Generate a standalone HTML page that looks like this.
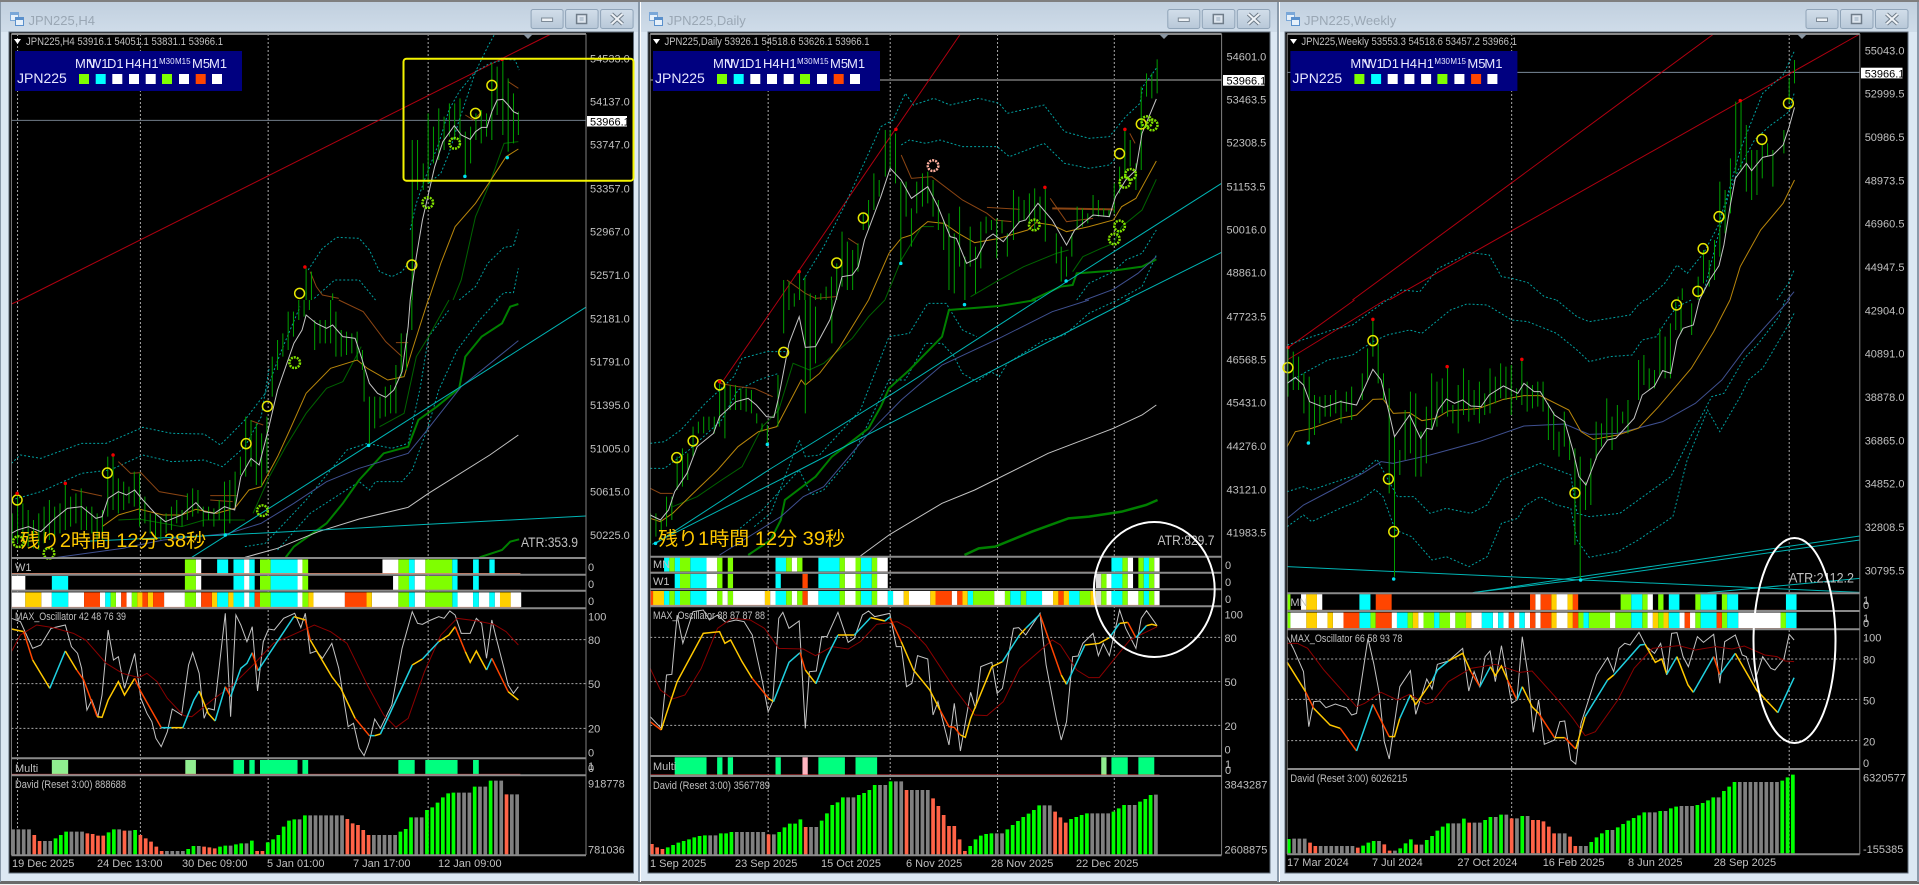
<!DOCTYPE html>
<html lang="ja"><head><meta charset="utf-8"><title>JPN225</title>
<style>
html,body{margin:0;padding:0;background:#dce8f3;overflow:hidden}
svg{display:block}
svg path,svg ellipse,svg line,svg polyline{vector-effect:non-scaling-stroke;fill:none}
text{font-family:"Liberation Sans","Noto Sans CJK JP",sans-serif;font-size:11px;fill:#c0c0c0}
.t{font-size:13px;fill:#9aa7b4}
.q{font-size:19px;fill:#ffc800}
.A{font-size:14px}
.pn{font-size:13px;fill:#e8e8ff}
.sm{font-size:8px;fill:#e8e8ff}
.v{stroke:#00a000;stroke-width:1}
.gr{stroke:#a8a8a8;stroke-width:1;stroke-dasharray:2 2}
.r{stroke:#b00010;stroke-width:1}
.c{stroke:#00b4b4;stroke-width:1}
.d{stroke:#00a0a0;stroke-width:1;stroke-dasharray:2 2}
.w{stroke:#c4c4c4;stroke-width:1}
.y{stroke:#b8860b;stroke-width:1}
.n{stroke:#006400;stroke-width:1}
.g{stroke:#008000;stroke-width:2}
.b{stroke:#3f5090;stroke-width:1}
.br{stroke:#8b4513;stroke-width:1}
.dr{stroke:#8b0000;stroke-width:1}
.o{stroke:#ff4500;stroke-width:1.5}
.a{stroke:#ffc800;stroke-width:1.5}
.k{stroke:#20d0e0;stroke-width:1.5}
.yc{stroke:#e8e800;stroke-width:1.5}
.ge{stroke:#80e000;stroke-width:2.5;stroke-dasharray:2 1}
.pg{stroke:#ffb0a0;stroke-width:2.5;stroke-dasharray:2 1}
.rd{stroke:#f00000;stroke-width:3.5;stroke-linecap:round}
.cd{stroke:#00e0f0;stroke-width:3.5;stroke-linecap:round}
.sL{stroke:#7fff00}.sC{stroke:#00ffff}.sW{stroke:#fff}.sO{stroke:#ff4500}.sG{stroke:#ffd000}.sE{stroke:#dcdcdc}
.sP{stroke:#00ff7f}.sH{stroke:#90ee90}.sK{stroke:#ffb6c1}
.bg{stroke:#808080;stroke-width:3.7}.bl{stroke:#00ff00;stroke-width:3.7}.bt{stroke:#ff6347;stroke-width:3.7}
.sep{stroke:#8a8a8a;stroke-width:2}
.sa{stroke:#f09070;stroke-width:1}
.re{stroke:#e04040;stroke-width:1}
.pl{stroke:#707c88;stroke-width:1}
</style></head><body>
<svg xmlns="http://www.w3.org/2000/svg" width="1919" height="885" viewBox="0 0 1919 885">
<defs>
<linearGradient id="tb" x1="0" y1="0" x2="0" y2="1"><stop offset="0" stop-color="#c0cfde"/><stop offset="1" stop-color="#cfdce9"/></linearGradient>
<linearGradient id="bt" x1="0" y1="0" x2="0" y2="1"><stop offset="0" stop-color="#d2deea"/><stop offset="1" stop-color="#b8c8d8"/></linearGradient>
<g id="btns">
<rect x=".5" y=".5" width="32" height="19" rx="2" fill="url(#bt)" stroke="#90a4b8"/>
<rect x="35" y=".5" width="32.5" height="19" rx="2" fill="url(#bt)" stroke="#90a4b8"/>
<rect x="70" y=".5" width="32.5" height="19" rx="2" fill="url(#bt)" stroke="#90a4b8"/>
<rect x="11" y="9" width="11" height="3.5" fill="#eef2f6" stroke="#7d8a97"/>
<rect x="46" y="5.5" width="10" height="9" fill="#dde5ee" stroke="#6f7c89" stroke-width="1.5"/>
<rect x="49" y="8" width="4" height="4" fill="#b8c6d4"/>
<path d="M81 5L92 15M92 5L81 15" style="stroke:#6f7c89;stroke-width:4;fill:none"/>
<path d="M81 5L92 15M92 5L81 15" style="stroke:#eef2f6;stroke-width:2;fill:none"/>
</g>
<g id="ico">
<rect x="0" y="0" width="9" height="9" fill="#7aa7d8"/><rect x="1" y="3" width="7" height="5" fill="#e6f0fa"/>
<rect x="5" y="5" width="9" height="9" fill="#5a90cc"/><rect x="6" y="8" width="7" height="5" fill="#e6f0fa"/>
</g>
<g id="panel">
<rect x="0" y="0" width="227" height="40" fill="#000080"/>
<text class="pn" x="60" y="17">MN</text><text class="pn" x="74" y="17">W1</text><text class="pn" x="92" y="17">D1</text><text class="pn" x="110" y="17">H4</text><text class="pn" x="127" y="17">H1</text>
<text class="sm" x="144" y="13">M30</text><text class="sm" x="160" y="13">M15</text>
<text class="pn" x="177" y="17">M5</text><text class="pn" x="194" y="17">M1</text>
<text class="pn" x="2" y="32" style="font-size:14px">JPN225</text>
<rect x="64" y="23" width="10" height="10" fill="#7fff00"/><rect x="80.7" y="23" width="10" height="10" fill="#0ff"/><rect x="97.3" y="23" width="10" height="10" fill="#fff"/><rect x="114" y="23" width="10" height="10" fill="#fff"/><rect x="130.7" y="23" width="10" height="10" fill="#fff"/><rect x="147" y="23" width="10" height="10" fill="#7fff00"/><rect x="164" y="23" width="10" height="10" fill="#fff"/><rect x="180.7" y="23" width="10" height="10" fill="#ff4500"/><rect x="197" y="23" width="10" height="10" fill="#fff"/>
</g>
</defs>

<!-- frame -->
<rect width="1919" height="885" fill="#dce8f3"/>
<rect width="1919" height="32" fill="url(#tb)"/>
<rect width="1919" height="2" fill="#7f7f7f"/>
<rect y="881" width="1919" height="3" fill="#6a6a6a"/>
<rect y="884" width="1919" height="1" fill="#f4f4f4"/>
<rect x="0" y="2" width="1" height="880" fill="#8a9aaa"/>
<rect x="638" y="2" width="2" height="880" fill="#8a9aaa"/><rect x="640" y="2" width="1" height="880" fill="#fff"/>
<rect x="1277" y="2" width="2" height="880" fill="#8a9aaa"/><rect x="1279" y="2" width="1" height="880" fill="#fff"/>
<rect x="1917" y="2" width="2" height="880" fill="#8a9aaa"/>

<use href="#ico" x="10" y="12"/><use href="#ico" x="649" y="12"/><use href="#ico" x="1286" y="12"/>
<text class="t" x="28.5" y="25">JPN225,H4</text>
<text class="t" x="667" y="25">JPN225,Daily</text>
<text class="t" x="1304" y="25">JPN225,Weekly</text>
<use href="#btns" x="530.6" y="9"/><use href="#btns" x="1167.3" y="9"/><use href="#btns" x="1805.5" y="9"/>

<rect x="9" y="32" width="624.5" height="841" fill="#000" stroke="#5f6b78"/>
<rect x="648" y="32" width="622" height="841" fill="#000" stroke="#5f6b78"/>
<rect x="1285" y="32" width="623" height="841" fill="#000" stroke="#5f6b78"/>

<!-- ===================== WINDOW 1 ===================== -->
<g transform="scale(.40816,.33333)">
<path class="gr" d="M43 102V2560M344 102V2560M657 102V2560M1049 102V2560"/>
<path class="pl" d="M28 361H1435"/>
<polyline class="r" points="50,900 1350,102"/>
<polyline class="d" points="1005,690 1020,610 1040,540 1075,430 1100,330 1125,275 1165,215 1195,140 1212,102"/>
<polyline class="d" points="1050,550 1080,520 1100,460 1125,360 1150,270 1165,215 1200,190 1240,178 1262,180 1272,210"/>
<polyline class="d" points="755,810 790,745 825,712 880,715 905,750 930,815 960,830 985,815 1000,790"/>
<polyline class="d" points="770,895 820,840 880,840 920,900"/>
<polyline class="d" points="1125,900 1165,860 1195,790 1235,742 1258,738 1270,688"/>
<polyline class="d" points="1215,900 1235,878 1258,878 1270,805"/>
<polyline class="br" points="760,815 775,860 790,885 830,895"/>
<polyline class="br" points="1140,345 1160,360 1180,335"/>
<polyline class="br" points="1245,245 1270,265"/>
<polyline class="n" points="1110,900 1130,840 1165,650 1200,550 1235,430 1270,425"/>
<polyline class="y" points="1050,900 1080,790 1115,680 1165,610 1200,545 1240,470 1270,447"/>
<path class="v" d="M750 805V900M763 815V900M815 880V900M1010 420V900M1023 420V570M1037 490V570M1049 340V550M1062 380V490M1075 325V480M1088 350V450M1101 310V410M1114 310V420M1127 295V440M1140 395V530M1153 380V490M1166 340V420M1179 330V430M1192 340V410M1205 190V420M1218 200V345M1232 180V405M1245 235V455M1258 280V430M1270 335V405"/>
<polyline class="w" points="1005,900 1012,840 1020,770 1035,660 1050,580 1065,500 1085,425 1113,377 1130,405 1152,418 1165,395 1180,382 1193,382 1205,335 1218,300 1232,298 1245,315 1258,335 1270,342"/>
<ellipse class="yc" cx="734" cy="880" rx="12" ry="15"/><ellipse class="yc" cx="1009" cy="795" rx="12" ry="15"/><ellipse class="yc" cx="1205" cy="256" rx="12" ry="15"/><ellipse class="yc" cx="1165" cy="340" rx="12" ry="15"/>
<ellipse class="ge" cx="1114" cy="430" rx="13" ry="16"/><ellipse class="ge" cx="1048" cy="608" rx="13" ry="16"/>
<path class="rd" d="M1230 178h.01M747 801h.01"/><path class="cd" d="M1139 529h.01M1243 473h.01"/>
</g>
<g transform="translate(0,300) scale(.40816,.33333)">
<polyline class="r" points="28,12 50,0"/>
<polyline class="d" points="28,490 50,465 100,475 200,430 260,430 350,382 420,400 500,402 540,435 600,360 650,280 690,150 735,20"/>
<polyline class="d" points="28,600 100,575 200,520 270,510 350,465 420,485 500,480 545,500 600,440 640,350 660,200"/>
<polyline class="d" points="680,750 760,640 880,545 905,570 920,545 985,545 1010,510 1049,380 1075,270 1120,150 1175,60 1220,0"/>
<polyline class="d" points="600,740 650,730 750,600 850,450 900,430 960,445 1000,430 1030,260 1050,110 1100,30"/>
<polyline class="br" points="290,485 320,520 345,518 390,575 460,590"/>
<path class="br" d="M175 568L250 588M515 587H580M515 600L570 605M615 362L645 375M970 128H1000"/>
<polyline class="br" points="830,0 890,35 945,125 985,170"/>
<polyline class="n" points="290,660 340,657 445,680 500,660 600,660"/>
<polyline class="n" points="620,640 660,530 700,440 750,340 800,265 840,245 885,140"/>
<polyline class="n" points="930,380 990,340 1020,170 1050,110 1100,0"/>
<polyline class="g" points="700,772 720,740 800,670 840,610 880,540 940,460 1000,440 1025,360 1070,320 1125,265 1140,170 1180,110 1230,70 1250,20 1270,12"/>
<polyline class="g" points="1175,772 1230,750 1250,725 1272,718"/>
<polyline class="b" points="140,772 300,745 400,720 560,700 640,670 720,610 800,545 880,505 1000,460 1040,400 1130,260 1270,122"/>
<polyline class="w" points="600,772 680,745 780,695 880,657 1000,622 1050,580 1200,465 1270,405"/>
<polyline class="c" points="470,772 1435,22"/>
<polyline class="c" points="190,725 550,705 1435,648"/>
<polyline class="y" points="250,680 290,645 340,627 400,645 445,645 480,628 530,640 575,625 610,570 640,560 680,470 710,390 750,280 810,205 875,180 900,205 950,240 990,230 1010,150 1049,0"/>
<path class="v" d="M30 640V730M43 580V730M56 610V720M69 630V740M82 660V745M95 640V750M108 620V730M121 600V720M134 620V710M147 610V700M160 555V690M173 590V680M186 580V670M199 565V690M212 620V690M225 620V700M238 640V720M251 630V720M264 470V650M277 465V630M290 535V640M303 545V630M316 560V610M329 515V620M342 520V680M355 590V670M368 640V700M381 640V720M394 650V720M407 640V700M420 620V690M433 600V670M446 630V680M459 580V660M472 565V650M485 570V640M498 620V680M511 620V660M524 625V680M537 600V660M550 545V705M563 540V670M576 515V620M589 470V525M602 350V530M615 360V500M628 370V555M641 400V560M654 350V520M667 170V290M680 120V210M693 100V170M706 35V150M719 35V110M732 0V60M745 0V50M758 0V30M771 60V150M784 60V130M797 60V130M810 0V130M823 35V170M836 90V170M849 95V165M862 100V160M875 95V180M888 150V210M892 210V305M905 290V435M918 290V385M931 290V355M944 260V350M957 255V340M970 195V340M983 100V230M996 100V210M1009 0V90"/>
<polyline class="w" points="28,700 43,690 70,680 100,695 130,660 165,625 200,620 235,655 250,650 265,595 290,575 310,585 330,570 350,600 380,640 405,665 445,645 480,608 500,635 525,640 550,620 575,630 590,530 615,475 635,495 655,400 680,270 720,130 740,90 750,45 775,70 800,85 815,75 840,110 870,115 885,170 905,250 925,280 945,292 965,270 985,215 1000,80 1005,0"/>
<ellipse class="yc" cx="42" cy="600" rx="12" ry="15"/><ellipse class="yc" cx="263" cy="519" rx="12" ry="15"/><ellipse class="yc" cx="603" cy="431" rx="12" ry="15"/><ellipse class="yc" cx="655" cy="319" rx="12" ry="15"/>
<ellipse class="ge" cx="722" cy="188" rx="13" ry="16"/><ellipse class="ge" cx="643" cy="632" rx="13" ry="16"/><ellipse class="ge" cx="120" cy="760" rx="13" ry="16"/><ellipse class="ge" cx="45" cy="725" rx="13" ry="16"/>
<path class="rd" d="M42 580h.01M160 550h.01M277 465h.01"/><path class="cd" d="M903 436h.01M552 705h.01"/>
<g stroke-width="14" style="stroke-width:14px">
<path class="sL" style="stroke-width:14px" d="M453 799H480M637 799H663M741 799H755M976 799H1002M1042 799H1108"/>
<path class="sC" style="stroke-width:14px" d="M532 799H559M572 799H598M611 799H624M663 799H729M1002 799H1016M1108 799H1121M1159 799H1173M1199 799H1212"/>
<path class="sW" style="stroke-width:14px" d="M480 799H493M598 799H611M729 799H741M937 799H976M1016 799H1042"/>
<path class="sL" style="stroke-width:14px" d="M453 849H480M637 849H663M741 849H755M976 849H1002M1042 849H1108"/>
<path class="sC" style="stroke-width:14px" d="M127 849H167M572 849H598M611 849H624M663 849H729M1002 849H1016M1108 849H1121M1159 849H1173"/>
<path class="sW" style="stroke-width:14px" d="M28 849H62M480 849H493M598 849H611M729 849H741M963 849H976M1016 849H1042"/>
</g>
<path class="sa" d="M28 821H1275M28 871H1275"/>
</g>
<g transform="translate(0,585) scale(.40816,.33333)">
<path class="sW" style="stroke-width:14.7px" d="M28 44H62M101 44H127M167 44H206M245 44H258M284 44H297M310 44H323M402 44H453M480 44H493M598 44H611M729 44H741M768 44H845M911 44H976M1016 44H1042M1121 44H1159M1173 44H1199M1212 44H1225M1251 44H1277"/>
<path class="sG" style="stroke-width:14.7px" d="M62 44H101M336 44H349M362 44H375M519 44H532M559 44H572M755 44H768M898 44H911M1225 44H1251"/>
<path class="sC" style="stroke-width:14.7px" d="M127 44H167M258 44H271M532 44H559M572 44H598M611 44H624M663 44H729M1002 44H1016M1108 44H1121M1159 44H1173M1199 44H1212"/>
<path class="sO" style="stroke-width:14.7px" d="M206 44H245M297 44H310M349 44H362M375 44H402M493 44H519M624 44H637M845 44H898"/>
<path class="sL" style="stroke-width:14.7px" d="M271 44H284M323 44H336M453 44H480M637 44H663M741 44H755M976 44H1002M1042 44H1108"/>
<path class="sa" d="M28 67H1275"/>
<path class="gr" d="M28 164H1435M28 296H1435M28 430H1435"/>
<polyline class="w" points="28,100 50,110 80,190 100,180 125,130 160,120 175,185 190,205 200,250 213,375 225,345 240,395 250,330 265,135 278,225 290,215 305,310 330,205 345,340 360,385 372,410 382,460 395,485 410,440 422,372 445,390 462,240 472,203 488,265 500,400 510,370 525,375 552,85 565,395 578,90 590,120 605,170 618,125 631,318 645,170 658,132 672,135 695,100 722,85 737,128 748,85 760,205 775,198 790,220 813,175 830,250 853,425 866,415 880,490 892,512 905,470 918,402 932,430 960,360 985,190 1010,80 1023,115 1035,118 1050,108 1075,95 1088,100 1102,78 1115,90 1130,145 1152,145 1167,100 1180,115 1192,220 1205,105 1218,170 1235,250 1245,300 1258,325 1270,305"/>
<polyline class="dr" points="28,200 50,150 90,120 130,128 180,145 210,165 260,235 300,265 340,278 360,265 385,290 410,340 450,392 470,395 520,345 570,300 620,240 670,175 720,148 770,120 810,140 850,175 900,300 940,390 970,427 1000,400 1040,260 1080,150 1120,100 1170,108 1210,118 1240,140 1270,180"/>
<polyline class="a" points="28,132 58,140"/><polyline class="o" points="58,140 80,225"/><polyline class="a" points="80,225 122,310"/><polyline class="k" points="122,310 160,198"/><polyline class="a" points="160,198 188,255"/><polyline class="o" points="188,255 205,285 238,395"/><polyline class="a" points="238,395 250,397 265,345 290,290 305,330 330,280"/><polyline class="o" points="330,280 345,320 395,428"/><polyline class="k" points="395,428 420,428"/><polyline class="a" points="420,428 448,428"/><polyline class="k" points="448,428 475,345 488,318"/><polyline class="a" points="488,318 510,385 527,408"/><polyline class="k" points="527,408 552,305"/><polyline class="o" points="552,305 565,335"/><polyline class="k" points="565,335 590,250 605,235 618,203"/><polyline class="o" points="618,203 632,257"/><polyline class="k" points="632,257 720,95"/><polyline class="a" points="720,95 748,105"/><polyline class="o" points="748,105 760,165"/><polyline class="a" points="760,165 813,275 835,310 870,400"/><polyline class="o" points="870,400 905,452"/><polyline class="k" points="905,452 918,452"/><polyline class="a" points="918,452 932,447"/><polyline class="k" points="932,447 1010,240"/><polyline class="a" points="1010,240 1035,222"/><polyline class="k" points="1035,222 1075,170"/><polyline class="a" points="1075,170 1100,150 1115,125"/><polyline class="o" points="1115,125 1140,200"/><polyline class="a" points="1140,200 1152,232 1167,198 1192,255"/><polyline class="k" points="1192,255 1205,220"/><polyline class="o" points="1205,220 1245,320"/><polyline class="a" points="1245,320 1270,345"/>
<path class="sH" style="stroke-width:14px" d="M127 546H167M454 546H480"/>
<path class="sP" style="stroke-width:14px" d="M572 546H598M611 546H624M637 546H729M741 546H755M976 546H1016M1042 546H1121M1159 546H1173"/>
<path class="re" d="M28 568H1275"/>
<path class="bg" d="M32 810V733M45 810V733M58 810V733M71 810V733M110 810V768M123 810V768M175 810V740M188 810V740M201 810V740M292 810V733M318 810V737M409 810V798M422 810V798M435 810V798M448 810V798M487 810V783M565 810V782M604 810V775M734 810V703M760 810V691M773 810V691M786 810V691M799 810V691M812 810V691M825 810V691M838 810V691M916 810V750M929 810V750M942 810V750M955 810V750M968 810V750M1020 810V697M1033 810V697M1124 810V623M1137 810V623M1150 810V623M1176 810V605M1189 810V605M1215 810V587M1228 810V587M1254 810V628M1267 810V628"/>
<path class="bl" d="M136 810V760M149 810V750M162 810V740M266 810V742M279 810V733M331 810V735M461 810V792M474 810V783M539 810V785M552 810V782M578 810V778M591 810V775M617 810V767M656 810V772M669 810V763M682 810V750M695 810V725M708 810V707M721 810V703M747 810V691M981 810V740M994 810V732M1007 810V697M1046 810V675M1059 810V667M1072 810V653M1085 810V637M1098 810V625M1111 810V623M1163 810V605M1202 810V587"/>
<path class="bt" d="M84 810V750M97 810V768M214 810V745M227 810V747M240 810V752M253 810V752M305 810V737M344 810V750M357 810V760M370 810V770M383 810V785M396 810V798M500 810V785M513 810V787M526 810V790M630 810V798M643 810V798M851 810V702M864 810V715M877 810V720M890 810V735M903 810V750M1241 810V628"/>
</g>
<path class="sep" style="fill:none" d="M11.4 34H586M11.4 558H586M11.4 574.7H586M11.4 590.7H586M11.4 608.3H586M11.4 758.3H586M11.4 775.3H586M11.4 855.3H586"/>
<path style="stroke:#808080;fill:none" d="M586 34V855M11.4 34V855"/>
<polygon points="523,34 533,34 528,39" fill="#8a96a2"/>
<polygon points="14,39 21,39 17.5,44" fill="#fff"/>
<text x="26" y="45" textLength="197" lengthAdjust="spacingAndGlyphs">JPN225,H4  53916.1 54051.1 53831.1 53966.1</text>
<use href="#panel" x="15" y="51"/>
<text x="590" y="62.7">54533.0</text><text x="590" y="105.7">54137.0</text><text x="590" y="148.7">53747.0</text><text x="590" y="192.3">53357.0</text><text x="590" y="235.7">52967.0</text><text x="590" y="279">52571.0</text><text x="590" y="322.3">52181.0</text><text x="590" y="365.7">51791.0</text><text x="590" y="409">51395.0</text><text x="590" y="452.3">51005.0</text><text x="590" y="495.7">50615.0</text><text x="590" y="539">50225.0</text>
<rect x="587" y="116" width="40" height="10.5" fill="#fff"/><text x="590" y="125.5" style="fill:#000">53966.1</text>
<text class="q" x="20" y="547" textLength="186" lengthAdjust="spacingAndGlyphs">残り2時間 12分 38秒</text>
<text class="A" x="521" y="547" textLength="57" lengthAdjust="spacingAndGlyphs">ATR:353.9</text>
<text x="15" y="571">W1</text>
<text x="588" y="571">0</text><text x="588" y="588">0</text><text x="588" y="605">0</text><text x="588" y="772">0</text><text x="588" y="770">1</text>
<text x="15" y="620" textLength="111" lengthAdjust="spacingAndGlyphs">MAX_Oscillator 42 48 76 39</text>
<text x="588" y="620.3">100</text><text x="588" y="644">80</text><text x="588" y="688">50</text><text x="588" y="732.7">20</text><text x="588" y="756.3">0</text>
<text x="15" y="772">Multi</text>
<text x="15" y="788" textLength="111" lengthAdjust="spacingAndGlyphs">David (Reset 3:00) 888688</text>
<text x="588" y="787.7">918778</text><text x="588" y="853.7">781036</text>
<text x="12" y="867">19 Dec 2025</text><text x="97" y="867">24 Dec 13:00</text><text x="182" y="867">30 Dec 09:00</text><text x="267" y="867">5 Jan 01:00</text><text x="353" y="867">7 Jan 17:00</text><text x="438" y="867">12 Jan 09:00</text>
<rect x="403.5" y="58.7" width="230" height="122" rx="3" fill="none" stroke="#f4f400" stroke-width="2"/>

<!-- ===================== WINDOW 2 ===================== -->
<g transform="translate(640,0) scale(.40816,.33333)">
<path class="gr" d="M314 102V2560M613 102V2560M876 102V2560M1162 102V2560"/>
<path style="stroke:#585858;stroke-width:2px" d="M25 240H1425"/>
<polyline class="r" points="340,900 785,102"/>
<polyline class="d" points="400,840 450,740 500,620 560,460 590,380 620,360 650,280 670,315 720,295 760,315 830,295 880,310 900,340 990,315 1040,395 1100,415 1150,410 1190,350 1225,310 1232,260 1265,205"/>
<polyline class="d" points="640,435 660,420 700,430 735,420 790,440 875,440 905,470 990,430 1040,490 1100,505 1150,495 1170,470"/>
<polyline class="d" points="1070,900 1100,850 1160,815 1190,780 1230,760 1265,690"/>
<polyline class="d" points="1170,900 1230,860 1265,765"/>
<polyline class="br" points="640,465 665,535 715,530 790,600 850,640 870,660 910,665"/>
<path class="br" d="M850 622L930 628M1200 400L1213 430M510 715L535 735"/>
<polyline class="br" points="1005,595 1045,665 1110,655"/>
<path class="br" style="stroke-width:2px" d="M1010 625L1160 628"/>
<polyline class="br" points="360,840 405,880 430,895 480,890"/>
<polyline class="n" points="600,900 640,780 690,680 720,680"/>
<polyline class="n" points="810,890 880,840 940,800 1020,760 1050,750"/>
<polyline class="n" points="1060,815 1085,770 1130,745 1160,730 1180,680 1230,630 1265,538"/>
<polyline class="g" points="960,900 1030,860 1060,855 1070,820 1160,812 1230,800 1265,778"/>
<polyline class="b" points="1090,900 1160,868 1220,820 1265,770"/>
<polyline class="c" points="975,900 1425,550"/><polyline class="c" points="1190,900 1425,757"/>
<polyline class="y" points="560,900 610,760 640,715 665,705 705,665 745,670 780,700 820,728 880,715 950,690 970,668 1010,675 1045,695 1100,680 1160,660 1180,620 1215,595 1265,483"/>
<path class="v" d="M352 840V900M365 845V900M378 880V900M391 815V900M404 830V900M417 880V900M430 885V900M443 880V900M456 860V900M469 830V900M482 790V900M495 695V860M508 725V870M521 750V870M534 730V815M547 640V690M560 600V690M573 520V630M586 540V590M601 390V530M613 390V505M626 400V550M639 545V790M652 545V650M665 625V740M678 545V640M692 520V620M705 515V610M718 540V650M731 600V690M744 660V750M757 640V870M770 700V880M783 620V800M796 770V900M809 680V800M822 740V880M835 665V805M848 650V700M861 660V690M874 655V775M887 660V700M900 700V770M915 570V720M928 590V670M941 600V660M954 580V665M967 565V690M980 590V660M993 560V725M1020 700V790M1032 740V845M1045 770V830M1058 700V770M1071 620V690M1084 625V680M1097 640V670M1110 585V650M1123 600V650M1136 625V650M1149 630V650M1162 550V640M1175 500V580M1188 390V530M1201 420V500M1215 490V570M1228 260V510M1241 220V290M1254 220V295M1267 178V280"/>
<polyline class="w" points="480,900 495,830 520,825 535,800 550,720 590,590 613,505 640,540 665,595 705,560 730,620 760,710 775,715 800,790 825,775 850,715 865,702 890,725 930,665 945,660 975,610 1010,660 1045,735 1065,690 1110,645 1150,650 1165,590 1190,540 1215,510 1230,400 1265,297"/>
<ellipse class="yc" cx="482" cy="789" rx="12" ry="15"/><ellipse class="yc" cx="547" cy="654" rx="12" ry="15"/><ellipse class="yc" cx="1175" cy="461" rx="12" ry="15"/><ellipse class="yc" cx="1228" cy="372" rx="12" ry="15"/>
<ellipse class="pg" cx="718" cy="497" rx="13" ry="16"/>
<ellipse class="ge" cx="966" cy="675" rx="13" ry="16"/><ellipse class="ge" cx="1175" cy="678" rx="13" ry="16"/><ellipse class="ge" cx="1162" cy="717" rx="13" ry="16"/><ellipse class="ge" cx="1188" cy="547" rx="13" ry="16"/><ellipse class="ge" cx="1202" cy="523" rx="13" ry="16"/><ellipse class="ge" cx="1242" cy="365" rx="13" ry="16"/><ellipse class="ge" cx="1255" cy="375" rx="13" ry="16"/>
<path class="rd" d="M390 815h.01M627 388h.01M992 562h.01M1188 388h.01"/><path class="cd" d="M639 790h.01M1044 843h.01"/>
</g>
<g transform="translate(640,300) scale(.40816,.33333)">
<polyline class="r" points="205,240 340,0"/>
<polyline class="d" points="25,430 60,425 100,390 160,310 230,230 250,175 310,155 365,155"/>
<polyline class="d" points="25,505 60,505 120,450 200,360 240,270 290,240 340,220"/>
<polyline class="d" points="280,680 320,640 390,420 405,470 440,465 540,330 610,110 660,100 705,10 750,10 790,90 825,110"/>
<polyline class="d" points="230,700 300,630 390,510 420,585 450,570 520,470 610,240 650,240 700,130 740,130 770,170 790,220 825,245 860,215 880,230 900,190 990,120 1040,105 1100,40 1170,0"/>
<polyline class="br" points="25,565 50,580 80,580"/>
<polyline class="br" points="195,250 240,260 280,265 325,290"/>
<polyline class="n" points="80,620 140,590 200,540 250,500 300,380 340,330 375,190 415,210 450,190 520,115 560,50 600,0"/>
<polyline class="g" points="265,765 320,720 345,660 355,600 430,530 470,470 560,385 590,320 610,265 660,210 740,110 757,30 880,18 970,0"/>
<polyline class="g" style="stroke-width:2.5px" points="795,765 830,745 870,740 960,695 1050,655 1100,650 1180,635 1240,615 1268,600"/>
<polyline class="b" points="195,765 345,650 400,590 450,560 560,400 640,300 740,195 880,115 1010,35 1100,0"/>
<polyline class="w" points="540,768 610,705 740,610 820,570 1000,460 1160,385 1230,345 1265,315"/>
<polyline class="c" points="35,733 315,510 620,280 975,0"/><polyline class="c" points="30,733 390,510 620,365 1200,0"/>
<polyline class="y" points="25,655 50,665 80,640 130,580 190,510 240,440 290,395 335,380 395,240 405,255 440,220 490,140 540,40 560,0"/>
<path class="v" d="M26 640V730M39 640V710M52 660V720M65 590V680M78 590V660M91 470V570M104 445V560M117 460V540M130 380V470M143 365V400M156 350V400M169 350V390M182 350V400M195 250V380M208 250V415M221 255V330M234 255V330M247 265V330M260 265V335M273 270V340M286 340V370M299 370V395M312 375V430M338 225V380M352 0V100M365 0V30M378 0V20M405 0V340M417 0V240M430 20V190M470 0V130"/>
<polyline class="w" points="25,645 50,660 70,630 85,575 115,520 140,440 180,400 195,350 235,305 265,295 285,315 310,350 328,352 340,290 365,130 390,50 405,142 430,140 465,60 480,0"/>
<ellipse class="yc" cx="90" cy="473" rx="12" ry="15"/><ellipse class="yc" cx="130" cy="423" rx="12" ry="15"/><ellipse class="yc" cx="195" cy="255" rx="12" ry="15"/><ellipse class="yc" cx="352" cy="157" rx="12" ry="15"/>
<path class="cd" d="M312 433h.01M795 14h.01M38 730h.01"/><path class="rd" d="M195 245h.01"/>
<path class="sC" style="stroke-width:14.3px" d="M59 793H72M85 793H98M123 793H163M332 793H358M437 793H489M541 793H568M1155 793H1182M1234 793H1247"/>
<path class="sL" style="stroke-width:14.3px" d="M72 793H85M98 793H123M189 793H202M215 793H228M358 793H372M385 793H398M489 793H502M528 793H541M568 793H581M1182 793H1195M1221 793H1234M1247 793H1260"/>
<path class="sW" style="stroke-width:14.3px" d="M163 793H189M372 793H385M502 793H528M581 793H607M1195 793H1208M1260 793H1273"/>
<path class="sC" style="stroke-width:14.3px" d="M85 843H98M123 843H163M332 843H345M437 843H489M541 843H568M1155 843H1182M1234 843H1247"/>
<path class="sL" style="stroke-width:14.3px" d="M98 843H123M189 843H202M215 843H228M489 843H502M528 843H541M568 843H581M1130 843H1143M1182 843H1195M1221 843H1234M1247 843H1260"/>
<path class="sW" style="stroke-width:14.3px" d="M163 843H189M502 843H528M581 843H607M1143 843H1155M1195 843H1208M1260 843H1273"/>
<path class="sO" style="stroke-width:14.3px" d="M398 843H411"/><path class="sE" style="stroke-width:14.3px" d="M1117 843H1130"/>
<path class="sa" d="M25 817H1273M25 867H1273"/>
</g>
<g transform="translate(640,585) scale(.40816,.33333)">
<path class="sO" style="stroke-width:14px" d="M25 39H32M398 39H411M724 39H764M777 39H790M1025 39H1038"/>
<path class="sG" style="stroke-width:14px" d="M32 39H59M306 39H319M646 39H659M711 39H724M790 39H803M1012 39H1025M1038 39H1051M1103 39H1116"/>
<path class="sC" style="stroke-width:14px" d="M59 39H72M85 39H98M123 39H163M332 39H358M437 39H489M541 39H568M607 39H620M803 39H816M907 39H933M946 39H985M1051 39H1077M1155 39H1182M1234 39H1247"/>
<path class="sL" style="stroke-width:14px" d="M72 39H85M98 39H123M189 39H202M215 39H228M358 39H372M385 39H398M489 39H502M528 39H541M568 39H581M816 39H868M894 39H907M933 39H946M1077 39H1103M1130 39H1143M1182 39H1195M1221 39H1234M1247 39H1260"/>
<path class="sW" style="stroke-width:14px" d="M163 39H189M202 39H215M228 39H306M319 39H332M372 39H385M411 39H437M502 39H528M581 39H607M620 39H646M659 39H711M764 39H777M868 39H894M985 39H1012M1143 39H1155M1195 39H1221M1260 39H1273"/>
<path class="sE" style="stroke-width:14px" d="M1116 39H1130"/>
<path class="sa" d="M25 61H1273"/>
<path class="gr" d="M25 157H1425M25 290H1425M25 421H1425"/>
<polyline class="w" points="25,395 52,430 65,270 78,268 91,90 105,175 130,80 155,75 170,105 190,90 210,112 235,105 255,110 275,150 300,290 314,380 325,350 340,100 350,82 365,130 390,108 405,430 415,260 432,258 445,155 458,155 485,82 510,172 525,160 545,90 560,78 575,95 612,85 628,185 640,185 653,305 666,295 680,212 705,222 718,390 730,350 757,480 770,355 785,498 810,322 822,370 835,245 862,232 875,325 888,310 915,130 928,128 945,150 980,85 995,240 1020,400 1032,465 1045,410 1060,215 1073,213 1085,175 1110,145 1123,212 1135,175 1150,212 1175,75 1190,130 1215,190 1228,100 1241,77 1267,122"/>
<polyline class="dr" points="25,250 50,315 80,342 110,330 150,250 190,130 225,100 270,105 305,130 340,190 400,192 430,212 470,185 510,192 540,170 580,118 630,110 660,130 700,180 770,310 820,390 850,392 890,350 930,250 1010,165 1030,180 1070,255 1100,278 1125,278 1160,225 1200,165 1267,125"/>
<polyline class="o" points="25,410 52,435"/><polyline class="a" points="52,435 65,385 91,290 155,145 195,140 208,175 222,165 250,230 275,280"/><polyline class="o" points="275,280 315,340"/><polyline class="a" points="315,340 327,350"/><polyline class="k" points="327,350 365,232 392,203"/><polyline class="o" points="392,203 405,255"/><polyline class="a" points="405,255 431,296"/><polyline class="k" points="431,296 458,215 485,150"/><polyline class="a" points="485,150 525,150"/><polyline class="k" points="525,150 565,98"/><polyline class="a" points="565,98 600,108"/><polyline class="k" points="600,108 613,95"/><polyline class="o" points="613,100 640,170"/><polyline class="a" points="640,170 670,255 710,315 735,375"/><polyline class="o" points="735,375 757,425 770,427 785,450"/><polyline class="a" points="785,450 797,457 810,400 862,245 888,230"/><polyline class="k" points="888,230 930,150"/><polyline class="a" points="930,150 945,130"/><polyline class="k" points="945,130 980,88"/><polyline class="o" points="980,88 1032,270"/><polyline class="a" points="1032,270 1045,298"/><polyline class="k" points="1045,298 1090,180"/><polyline class="a" points="1090,180 1125,175 1150,158"/><polyline class="k" points="1150,158 1175,115"/><polyline class="a" points="1175,115 1195,112"/><polyline class="o" points="1195,112 1215,158"/><polyline class="k" points="1215,158 1241,122"/><polyline class="a" points="1241,122 1254,118 1267,122"/>
<path class="sP" style="stroke-width:17.5px" d="M85 543H163M189 543H202M215 543H228M332 543H345M437 543H502M528 543H581M1155 543H1195M1221 543H1260"/>
<path class="sK" style="stroke-width:17.5px" d="M398 543H411"/><path class="sH" style="stroke-width:17.5px" d="M1130 543H1143"/>
<path class="re" d="M25 570H1273"/>
<path class="bg" d="M172 810V751M185 810V751M237 810V741M250 810V741M263 810V741M276 810V741M289 810V741M302 810V741M328 810V748M419 810V726M432 810V726M510 810V637M523 810V637M588 810V600M601 810V600M627 810V589M640 810V589M666 810V615M679 810V615M692 810V615M705 810V615M874 810V745M887 810V745M991 810V661M1004 810V661M1108 810V685M1121 810V685M1134 810V685M1147 810V685M1199 810V660M1212 810V660M1264 810V629"/>
<path class="bl" d="M68 810V787M81 810V780M94 810V773M107 810V768M120 810V763M133 810V757M146 810V753M159 810V751M198 810V745M211 810V745M224 810V741M341 810V741M354 810V727M367 810V716M380 810V716M393 810V703M445 810V707M458 810V685M471 810V660M484 810V652M497 810V637M536 810V630M549 810V624M562 810V615M575 810V600M614 810V589M809 810V783M822 810V763M835 810V752M848 810V747M861 810V745M900 810V733M913 810V720M926 810V708M939 810V696M952 810V686M965 810V675M978 810V661M1056 810V702M1069 810V696M1082 810V690M1095 810V685M1160 810V680M1173 810V670M1186 810V660M1225 810V650M1238 810V642M1251 810V630"/>
<path class="bt" d="M29 810V777M42 810V787M55 810V792M315 810V748M406 810V726M653 810V615M718 810V640M731 810V663M744 810V690M757 810V723M770 810V723M783 810V763M796 810V798M1017 810V680M1030 810V697M1043 810V713"/>
</g>
<path class="sep" style="fill:none" d="M650.2 34H1221.6M650.2 556.7H1221.6M650.2 572.7H1221.6M650.2 589.3H1221.6M650.2 606.3H1221.6M650.2 756H1221.6M650.2 776H1221.6M650.2 855.3H1221.6"/>
<path style="stroke:#808080;fill:none" d="M1221.6 34V855M650.2 34V855"/>
<polygon points="1159,34 1169,34 1164,39" fill="#8a96a2"/>
<polygon points="653,39 660,39 656.5,44" fill="#fff"/>
<text x="664.5" y="45" textLength="205" lengthAdjust="spacingAndGlyphs">JPN225,Daily  53926.1 54518.6 53626.1 53966.1</text>
<use href="#panel" x="653" y="51"/>
<text x="1226.5" y="60.7">54601.0</text><text x="1226.5" y="103.7">53463.5</text><text x="1226.5" y="146.7">52308.5</text><text x="1226.5" y="190.3">51153.5</text><text x="1226.5" y="233.3">50016.0</text><text x="1226.5" y="276.7">48861.0</text><text x="1226.5" y="320.3">47723.5</text><text x="1226.5" y="363.3">46568.5</text><text x="1226.5" y="406.7">45431.0</text><text x="1226.5" y="450">44276.0</text><text x="1226.5" y="493.3">43121.0</text><text x="1226.5" y="536.7">41983.5</text>
<rect x="1223" y="75" width="41.5" height="10.7" fill="#fff"/><text x="1226.5" y="84.5" style="fill:#000">53966.1</text>
<text class="q" x="658" y="545" textLength="187" lengthAdjust="spacingAndGlyphs">残り1時間 12分 39秒</text>
<text class="A" x="1157.5" y="545" textLength="57" lengthAdjust="spacingAndGlyphs">ATR:829.7</text>
<text x="653" y="568">MN</text><text x="653" y="585">W1</text>
<text x="1225" y="569">0</text><text x="1225" y="586">0</text><text x="1225" y="603">0</text><text x="1225" y="768">1</text><text x="1225" y="774">0</text>
<text x="653" y="619" textLength="112" lengthAdjust="spacingAndGlyphs">MAX_Oscillator 88 87 87 88</text>
<text x="1224.5" y="618.3">100</text><text x="1224.5" y="642">80</text><text x="1224.5" y="686">50</text><text x="1224.5" y="730">20</text><text x="1224.5" y="753.7">0</text>
<text x="653" y="770">Multi</text>
<text x="653" y="789" textLength="117" lengthAdjust="spacingAndGlyphs">David (Reset 3:00) 3567789</text>
<text x="1224.5" y="788.3">3843287</text><text x="1224.5" y="853.7">2608875</text>
<text x="650" y="867">1 Sep 2025</text><text x="735" y="867">23 Sep 2025</text><text x="821" y="867">15 Oct 2025</text><text x="906" y="867">6 Nov 2025</text><text x="991" y="867">28 Nov 2025</text><text x="1076" y="867">22 Dec 2025</text>
<ellipse cx="1154.3" cy="589.5" rx="60.4" ry="67.5" style="fill:none;stroke:#fff;stroke-width:2"/>

<!-- ===================== WINDOW 3 ===================== -->
<g transform="translate(1279,0) scale(.40816,.33333)">
<path class="gr" d="M570 102V2560M1250 102V2560"/>
<path class="pl" style="stroke:#7a8a9a" d="M20 217H1423"/>
<polyline class="r" points="180,900 1065,102"/><polyline class="r" points="270,900 1423,102"/>
<polyline class="d" points="265,900 300,870 345,875 390,805 440,775 465,757 515,765 545,830 570,835 610,848 650,890 680,900"/>
<polyline class="d" points="900,900 945,850 975,795 1000,820 1040,760 1075,680 1105,560 1130,450 1185,280 1235,225 1262,155"/>
<polyline class="d" points="1040,880 1100,590 1125,510 1165,420 1200,380 1250,335 1262,280"/>
<polyline class="d" points="1220,900 1248,850 1262,810"/>
<polyline class="b" points="1245,900 1262,875"/>
<polyline class="y" points="1105,900 1130,800 1180,690 1235,610 1263,540"/>
<path class="v" d="M978 890V900M988 865V900M1027 830V900M1040 750V850M1054 780V860M1067 720V840M1080 545V770M1093 570V700M1106 475V640M1119 305V520M1132 300V515M1145 375V575M1158 450V600M1171 450V585M1184 430V535M1197 430V470M1210 450V560M1237 390V460M1250 235V310M1263 180V250"/>
<polyline class="w" points="1030,900 1055,840 1078,797 1090,735 1105,620 1118,535 1145,490 1158,512 1185,472 1210,465 1235,435 1250,380 1263,322"/>
<ellipse class="yc" cx="1248" cy="310" rx="12" ry="15"/><ellipse class="yc" cx="1183" cy="418" rx="12" ry="15"/><ellipse class="yc" cx="1078" cy="650" rx="12" ry="15"/><ellipse class="yc" cx="1039" cy="746" rx="12" ry="15"/><ellipse class="yc" cx="1026" cy="874" rx="12" ry="15"/>
<path class="rd" d="M1130 302h.01"/>
</g>
<g transform="translate(1279,300) scale(.40816,.33333)">
<polyline class="r" points="20,145 185,0"/><polyline class="r" points="20,180 260,0"/>
<polyline class="d" points="20,250 60,220 120,180 180,165 230,125 265,105 320,90 350,100 420,30 460,12 510,15 570,60 610,65 680,100 730,150 760,185 810,170 865,165 890,120 925,110 950,60 975,20 1010,0"/>
<polyline class="d" points="20,135 130,90 180,75 230,30 265,0"/>
<polyline class="d" points="680,0 730,50 760,65 860,45 880,15 895,0"/>
<polyline class="d" points="20,680 60,645 80,665 150,625 200,600 235,568 255,590 270,640 285,690 325,710 375,780 410,770 465,800 510,770 545,670 585,655 600,620 640,590 680,615 715,625 730,720 760,772 830,755 880,720 965,650 1000,480 1050,330 1080,395 1130,290 1150,240 1185,205 1250,70 1262,40"/>
<polyline class="d" points="20,575 60,560 80,570 200,520 240,478 290,590 330,590 370,640 410,625 470,640 510,615 545,540 600,510 640,490 715,525 730,640 760,650 835,640 960,530 1000,430 1060,290 1090,280 1140,175 1175,130 1225,50 1240,0"/>
<polyline class="b" points="20,655 60,615 130,570 205,520 250,485 280,490 370,465 490,425 600,378 700,372 760,403 830,400 940,365 1020,310 1085,240 1140,150 1250,0"/>
<polyline class="y" points="20,440 40,395 80,385 150,355 190,345 230,298 255,297 280,340 320,338 350,362 385,355 415,333 490,325 550,298 600,287 640,287 710,330 740,395 770,418 830,405 880,385 930,320 1010,205 1065,95 1105,0"/>
<polyline class="c" points="20,800 560,830 1423,877"/>
<polyline class="c" points="475,878 740,830 1423,708"/><polyline class="c" points="475,878 740,838 1423,720"/><polyline class="c" points="1050,878 1423,835"/>
<path class="v" d="M22 140V290M35 155V270M48 170V270M61 220V340M74 230V425M87 285V405M100 290V370M113 285V350M126 285V350M139 270V340M152 300V370M165 275V335M178 260V360M204 220V300M217 145V240M230 60V170M243 130V250M256 220V300M270 265V580M283 410V830M296 450V525M309 330V480M322 275V460M335 280V530M348 395V530M361 320V490M374 220V390M387 245V380M400 235V340M413 200V350M426 315V370M439 255V400M452 205V345M465 240V365M478 270V345M491 245V370M504 280V345M517 205V340M530 230V310M543 190V295M556 200V300M569 195V345M582 265V300M595 180V315M608 245V335M621 255V325M634 245V320M647 245V335M660 310V420M673 335V450M686 395V470M699 335V440M712 410V480M725 445V735M738 470V835M751 545V630M764 475V615M777 365V480M790 370V440M803 295V420M816 350V450M829 315V400M842 335V370M855 300V400M881 180V300M894 165V255M907 205V270M920 210V265M933 85V230M946 110V235M959 70V235M972 5V90M985 5V100M1011 10V105"/>
<polyline class="w" points="20,250 40,232 60,255 75,305 110,322 150,305 190,315 230,208 250,240 270,340 283,410 320,345 347,415 362,385 375,388 390,330 410,297 430,310 450,300 470,318 495,320 515,285 550,258 585,280 600,250 625,275 640,275 675,345 700,365 720,450 735,530 752,555 780,465 805,420 825,415 870,355 890,285 920,258 940,212 960,220 975,120 990,85 1015,75 1030,0"/>
<ellipse class="yc" cx="230" cy="122" rx="12" ry="15"/><ellipse class="yc" cx="268" cy="537" rx="12" ry="15"/><ellipse class="yc" cx="281" cy="695" rx="12" ry="15"/><ellipse class="yc" cx="725" cy="579" rx="12" ry="15"/><ellipse class="yc" cx="22" cy="203" rx="12" ry="15"/><ellipse class="yc" cx="974" cy="15" rx="12" ry="15"/>
<path class="rd" d="M230 58h.01M412 200h.01M595 178h.01M22 142h.01"/><path class="cd" d="M72 429h.01M281 837h.01M739 840h.01"/>
</g>
<g transform="translate(1279,585) scale(.40816,.33333)">
<path class="sL" style="stroke-width:15.7px" d="M20 51H28M837 51H863M890 51H903M929 51H942M1020 51H1033M1085 51H1098"/>
<path class="sW" style="stroke-width:15.7px" d="M54 51H67M93 51H106M628 51H641M680 51H707M903 51H916"/>
<path class="sG" style="stroke-width:15.7px" d="M67 51H93M667 51H680M707 51H720"/>
<path class="sC" style="stroke-width:15.7px" d="M197 51H224M863 51H890M955 51H981M1033 51H1072M1098 51H1125M1242 51H1268"/>
<path class="sO" style="stroke-width:15.7px" d="M237 51H276M615 51H628M641 51H667M720 51H733"/>
<path class="sL" style="stroke-width:15.7px" d="M20 106H28M224 106H237M315 106H328M354 106H380M393 106H419M432 106H458M733 106H746M759 106H811M824 106H863M890 106H903M929 106H942M1020 106H1033M1085 106H1098M1229 106H1242"/>
<path class="sW" style="stroke-width:15.7px" d="M28 106H67M93 106H119M132 106H158M276 106H289M341 106H354M419 106H432M471 106H497M524 106H537M550 106H563M576 106H589M602 106H615M628 106H641M680 106H707M811 106H824M903 106H916M981 106H994M1007 106H1020M1125 106H1229"/>
<path class="sG" style="stroke-width:15.7px" d="M67 106H93M119 106H132M328 106H341M458 106H471M667 106H680M707 106H720M916 106H929M942 106H955"/>
<path class="sO" style="stroke-width:15.7px" d="M158 106H197M237 106H276M563 106H576M615 106H628M641 106H667M720 106H733M994 106H1007M1072 106H1085"/>
<path class="sC" style="stroke-width:15.7px" d="M197 106H224M289 106H315M380 106H393M497 106H524M537 106H550M589 106H602M746 106H759M863 106H890M955 106H981M1033 106H1072M1098 106H1125M1242 106H1268"/>
<path class="sa" d="M20 76H1268M20 131H1268"/>
<path class="gr" d="M20 222H1423M20 343H1423M20 467H1423"/>
<polyline class="w" points="20,155 35,190 60,260 73,425 85,350 100,348 115,368 138,357 165,368 178,390 190,385 218,160 232,235 245,320 258,470 270,522 296,305 322,257 335,388 362,282 375,312 388,238 415,228 450,190 465,318 478,260 492,305 505,215 517,198 530,290 545,182 570,355 583,345 596,155 610,270 623,442 636,345 650,478 675,465 688,410 700,408 715,525 727,537 740,415 778,270 805,218 820,260 833,190 847,175 860,180 882,142 900,185 920,205 935,175 950,270 962,145 975,143 990,215 1003,245 1025,155 1040,172 1065,148 1080,295 1092,170 1118,150 1135,210 1145,215 1165,290 1185,215 1205,250 1215,255 1237,222 1250,148 1262,165"/>
<polyline class="dr" points="20,175 45,175 70,190 110,255 190,365 210,355 250,322 290,345 320,328 360,357 375,352 415,290 470,250 530,238 590,262 620,258 680,340 720,400 750,452 775,440 830,345 870,250 915,190 980,182 1020,195 1070,185 1110,192 1140,183 1190,210 1220,215 1240,228 1262,230"/>
<polyline class="a" points="20,232 65,320"/><polyline class="o" points="65,320 85,370"/><polyline class="a" points="85,370 125,420 150,430"/><polyline class="o" points="150,430 190,498"/><polyline class="k" points="190,498 230,358"/><polyline class="o" points="230,358 270,455"/><polyline class="a" points="270,455 283,455 296,400"/><polyline class="k" points="296,400 322,330"/><polyline class="a" points="322,330 335,358 375,288"/><polyline class="k" points="375,288 388,255 415,228"/><polyline class="a" points="415,228 450,205 470,260"/><polyline class="o" points="470,260 492,305"/><polyline class="k" points="492,305 518,245"/><polyline class="a" points="518,245 530,272 545,243 560,285"/><polyline class="o" points="560,285 583,345"/><polyline class="k" points="583,345 596,305"/><polyline class="a" points="596,305 620,365 636,385"/><polyline class="o" points="636,385 675,458"/><polyline class="a" points="675,458 700,458"/><polyline class="o" points="700,458 727,492"/><polyline class="a" points="727,492 750,395"/><polyline class="k" points="750,395 805,285"/><polyline class="a" points="805,285 820,270"/><polyline class="k" points="820,270 885,180 897,178"/><polyline class="a" points="897,178 922,232 938,222 950,268"/><polyline class="k" points="950,268 975,215"/><polyline class="a" points="975,215 1002,300 1015,322"/><polyline class="k" points="1015,322 1065,215"/><polyline class="o" points="1065,215 1080,270"/><polyline class="k" points="1080,270 1118,205"/><polyline class="a" points="1118,205 1170,315 1222,383"/><polyline class="k" points="1222,383 1262,278"/>
<path class="bg" d="M37 805V761M50 805V761M63 805V761M102 805V783M115 805V783M128 805V783M141 805V783M154 805V783M167 805V783M180 805V783M245 805V768M284 805V797M349 805V779M427 805V715M440 805V715M479 805V713M492 805V713M531 805V696M557 805V689M583 805V700M609 805V693M687 805V745M700 805V745M739 805V783M752 805V783M817 805V735M908 805V682M921 805V682M947 805V678M986 805V663M999 805V663M1012 805V663M1077 805V637M1129 805V591M1142 805V591M1155 805V591M1168 805V591M1181 805V591M1194 805V591M1207 805V591M1220 805V591"/>
<path class="bl" d="M24 805V762M206 805V782M219 805V773M232 805V768M297 805V790M310 805V775M323 805V763M362 805V765M375 805V753M388 805V737M401 805V725M414 805V715M453 805V701M505 805V705M518 805V696M544 805V689M596 805V693M765 805V771M778 805V757M791 805V745M804 805V735M830 805V727M843 805V717M856 805V707M869 805V699M882 805V691M895 805V682M934 805V678M960 805V670M973 805V665M1025 805V660M1038 805V654M1051 805V646M1064 805V637M1090 805V618M1103 805V605M1116 805V591M1233 805V587M1246 805V577M1259 805V569"/>
<path class="bt" d="M76 805V773M89 805V783M193 805V788M258 805V778M271 805V797M336 805V779M466 805V713M570 805V700M622 805V705M635 805V705M648 805V709M661 805V725M674 805V745M713 805V755M726 805V783"/>
</g>
<path class="sep" style="fill:none" d="M1287.2 34H1859.8M1287.2 593.3H1859.8M1287.2 611H1859.8M1287.2 629.3H1859.8M1287.2 769H1859.8M1287.2 854.3H1859.8"/>
<path style="stroke:#808080;fill:none" d="M1859.8 34V854M1287.2 34V854"/>
<polygon points="1797,34 1807,34 1802,39" fill="#8a96a2"/>
<polygon points="1290,39 1297,39 1293.5,44" fill="#fff"/>
<text x="1301.4" y="45" textLength="215.5" lengthAdjust="spacingAndGlyphs">JPN225,Weekly  53553.3 54518.6 53457.2 53966.1</text>
<use href="#panel" x="1290.4" y="51"/>
<text x="1864.7" y="54.3">55043.0</text><text x="1864.7" y="97.7">52999.5</text><text x="1864.7" y="141">50986.5</text><text x="1864.7" y="184.3">48973.5</text><text x="1864.7" y="227.7">46960.5</text><text x="1864.7" y="271">44947.5</text><text x="1864.7" y="314.3">42904.0</text><text x="1864.7" y="357.7">40891.0</text><text x="1864.7" y="401">38878.0</text><text x="1864.7" y="444.3">36865.0</text><text x="1864.7" y="487.7">34852.0</text><text x="1864.7" y="531">32808.5</text><text x="1864.7" y="574.3">30795.5</text>
<rect x="1861" y="67.7" width="41.5" height="10.7" fill="#fff"/><text x="1864.7" y="77.3" style="fill:#000">53966.1</text>
<text class="A" x="1789" y="582.7" textLength="65" lengthAdjust="spacingAndGlyphs">ATR:2112.2</text>
<text x="1290.4" y="606">MN</text>
<text x="1863" y="604">1</text><text x="1863" y="609">0</text><text x="1863" y="622">1</text><text x="1863" y="627">0</text>
<text x="1290.4" y="642" textLength="112" lengthAdjust="spacingAndGlyphs">MAX_Oscillator 66 58 93 78</text>
<text x="1863" y="641.7">100</text><text x="1863" y="663.7">80</text><text x="1863" y="704.3">50</text><text x="1863" y="745.3">20</text><text x="1863" y="767">0</text>
<text x="1290.4" y="782" textLength="117" lengthAdjust="spacingAndGlyphs">David (Reset 3:00) 6026215</text>
<text x="1863" y="781.7">6320577</text><text x="1863" y="853">-155385</text>
<text x="1287" y="866">17 Mar 2024</text><text x="1372" y="866">7 Jul 2024</text><text x="1457.4" y="866">27 Oct 2024</text><text x="1542.7" y="866">16 Feb 2025</text><text x="1628" y="866">8 Jun 2025</text><text x="1713.7" y="866">28 Sep 2025</text>
<ellipse cx="1794.5" cy="640.5" rx="41" ry="102.5" style="fill:none;stroke:#fff;stroke-width:2"/>
</svg>
</body></html>
